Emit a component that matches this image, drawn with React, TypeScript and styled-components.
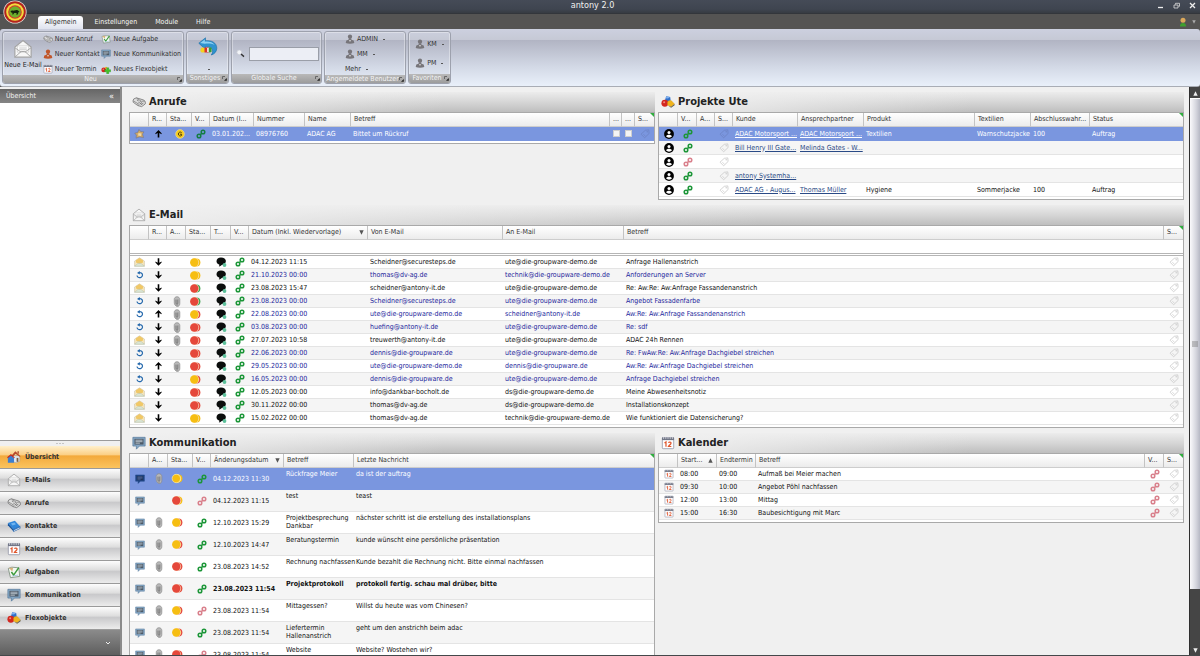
import React from "react";
import styled, { createGlobalStyle, css } from "styled-components";

const GlobalStyle = createGlobalStyle`
  * { box-sizing: border-box; }
  html, body { margin: 0; padding: 0; height: 100%; overflow: hidden; }
  body, button, input, table {
    font-family: "DejaVu Sans Condensed", "DejaVu Sans", "Noto Sans", sans-serif;
    font-size: 7px;
    line-height: 9px;
    color: #222;
  }
  button { border: 0; background: none; padding: 0; margin: 0; white-space: nowrap; cursor: pointer; }
  svg { display: block; flex: none; }
`;

/* ---------- icons ---------- */

type IconProps = { size?: number };

const Logo = () => (
  <svg width="24" height="24" viewBox="0 0 24 24">
    <circle cx="12" cy="12" r="11.6" fill="#e8e0d8" />
    <circle cx="12" cy="12" r="10.8" fill="#b3241c" />
    <circle cx="12" cy="12" r="8.8" fill="#f3dc3c" />
    <circle cx="12" cy="12" r="6.8" fill="#d8352a" />
    <circle cx="12" cy="12" r="5.8" fill="#6fae2c" />
    <path d="M7.500 11.200c1-1.200 2.400-.4 3.800-.6 1.800-.6 3.200-.8 4.400.4l.9 1-1.300.3c.2 1-.3 1.600-1 2.400h-.9l.2-1.600h-2.400l-1 1.500h-.9l.2-1.800c-1.200-.1-1.700-.7-2-1.600z" fill="#14240c" />
  </svg>
);

const OpenMail = ({ size = 14 }: IconProps) => (
  <svg width={size} height={size} viewBox="0 0 16 16">
    <path d="M1.500 6.500 8 1.200l6.500 5.300v8h-13z" fill="#f7f7f7" stroke="#a2a2a2" strokeWidth=".9" />
    <path d="M3.500 5.500h9v5h-9z" fill="#fff" stroke="#c4c4c4" strokeWidth=".5" />
    <path d="M1.500 14.500 6.500 10h3l5 4.500M1.500 7l5 3.500M14.500 7l-5 3.500" fill="none" stroke="#a8a8a8" strokeWidth=".8" />
    <path d="M5 7.200h6M5 8.600h6" stroke="#bbb" strokeWidth=".6" />
  </svg>
);

const YellowMail = () => (
  <svg width="11" height="10" viewBox="0 0 11 10">
    <path d="M.6 4 5.500.8 10.400 4v5.200H.6z" fill="#f6e6bc" stroke="#c4b89c" strokeWidth=".5" />
    <path d="M2 3.200 5.500 1l3.500 2.200v2.300L5.500 7 2 5.500z" fill="#f0c868" />
    <path d="M.6 9.200 4 6.400h3l3.400 2.800z" fill="#dbe6d4" stroke="#b4c2b4" strokeWidth=".5" />
  </svg>
);

const Phone = ({ size = 14 }: IconProps) => (
  <svg width={size} height={size} viewBox="0 0 16 16">
    <path d="M1.200 6.500 2 4.500 5 3.200l8.500 2.600 1.700 2v2.400L11 13.300 6.500 12 1.400 8.300z" fill="#dedede" stroke="#707070" strokeWidth=".9" />
    <path d="m1.500 6.700 5 3 .8 2.300M5 3.500l5.800 3.700 4-.2M6.500 9.700l3.800-2.500" fill="none" stroke="#777" strokeWidth=".8" />
    <path d="m8.500 10.500 3-2M10 11.300l3-2M7.600 6.800l-2-1.200" stroke="#555" strokeWidth=".8" />
  </svg>
);

const Bust = ({ size = 10, color = "#77757a" }: IconProps & { color?: string }) => (
  <svg width={size} height={size} viewBox="0 0 10 10">
    <path d="M2.900 2.600C2.900 1.200 3.800.4 5 .4s2.100.8 2.100 2.200S6.200 5 5 5 2.900 4 2.900 2.600z" fill={color} />
    <path d="M3.800 4.500h2.400l.3 1.300 2.200.7.600 2.500c-2.500 1-6.100 1-8.600 0l.6-2.500 2.200-.7z" fill={color} />
    <path d="m4.200 6 .8 2.200.8-2.200z" fill="#e8e8e8" />
  </svg>
);

const CalendarIcon = ({ size = 14 }: IconProps) => (
  <svg width={size} height={size} viewBox="0 0 16 16">
    <rect x="1.500" y="2" width="13" height="12.500" rx="1" fill="#fdfdff" stroke="#8f93a3" strokeWidth=".9" />
    <path d="M1.200 1.500h13.600v3.200H1.200z" fill="#6f7484" />
    <path d="M3 1v2.500M5.500 1v2.500M8 1v2.500M10.500 1v2.500M13 1v2.500" stroke="#e7e7ee" strokeWidth=".8" />
    <path d="m4 8 1.700-1.200v5.400M8.500 7.700c.7-1.300 3.200-1 2.900.6-.2 1.200-1.900 2.200-2.900 3.700h3.300" fill="none" stroke="#e0562c" strokeWidth="1.400" />
  </svg>
);

const TaskIcon = ({ size = 14 }: IconProps) => (
  <svg width={size} height={size} viewBox="0 0 16 16">
    <path d="m1.500 4 4-1.500 8 .7 1 9.800-10.500 1.500z" fill="#f4f8f2" stroke="#758877" strokeWidth=".9" />
    <path d="m2 3 5 .2-1 4.200z" fill="#d8b27a" />
    <path d="m5 8 2.600 3.500L13.500 3" fill="none" stroke="#3b9b3b" strokeWidth="1.700" />
    <path d="M5.500 12.600 13 11.500" stroke="#8fb5d8" strokeWidth=".8" />
  </svg>
);

const ChatIcon = ({ size = 14, dark = false }: IconProps & { dark?: boolean }) => (
  <svg width={size} height={size} viewBox="0 0 16 16">
    <path d="M1 1.500h14v10H8.500L5 15v-3.500H1z" fill={dark ? "#1f4684" : "#86a8c6"} stroke={dark ? "#1f4684" : "#54799a"} strokeWidth=".8" />
    <path d="M2.800 3.200h10.400v6.600H2.800z" fill={dark ? "#22355c" : "#4d5a68"} />
    <path d="M4 4.800h8M4 6.500h8M4 8.200h5" stroke={dark ? "#6f8cc4" : "#dfe8ef"} strokeWidth=".8" />
  </svg>
);

const FlexIcon = ({ size = 14, plus = false }: IconProps & { plus?: boolean }) => (
  <svg width={size} height={size} viewBox="0 0 16 16">
    {!plus && <path d="m6 1.500 4.500.8.500 4-3.500 2-3-2z" fill="#2f6fca" />}
    {!plus && <path d="m6.500 1.800 3.800.6-2.300 1.700-3-.3z" fill="#7fb1ee" />}
    <circle cx="4.400" cy="9.400" r="3.900" fill="#d3271f" />
    <circle cx="3.600" cy="8.200" r="1.200" fill="#f0877f" />
    {plus && <path d="M6 5.500c1.500-1.500 3.500-1 4 .5L8 8z" fill="#f0b41c" />}
    {plus ? (
      <path d="M9 6h3.500v3h3v3.500h-3v3H9v-3H6V9h3z" fill="#43c22b" stroke="#1f8a17" strokeWidth=".5" />
    ) : (
      <path d="M7.500 8c1.500-2.500 4.500-2 5.500-.2l2.500 2.400-4 3.300-4-2z" fill="#f0b41c" stroke="#d6960c" strokeWidth=".4" />
    )}
    {!plus && <path d="m8.500 12.300 3 1.200 4-3.200v1.400l-4 3z" fill="#5c5a50" />}
  </svg>
);

const HouseIcon = () => (
  <svg width="14" height="14" viewBox="0 0 16 16">
    <path d="M6 6.500h8.500V13l-4 1.500L6 13z" fill="#dfe6ee" stroke="#8a96a8" strokeWidth=".5" />
    <path d="m4.500 7 5-5.500L15.500 7l-1 .8-4.700-3.600L6 8.500z" fill="#b5482c" />
    <path d="M11 9h2v4.500h-2z" fill="#7b5a3c" />
    <path d="M1 8.500 4.500 6 8 9v5.500H1z" fill="#3d7fd0" />
    <path d="m.5 8.800 4-3.300L8.500 9" fill="none" stroke="#c62f22" strokeWidth="1.300" />
    <path d="M12 1.500h1.500v3L12 3.400z" fill="#a9442c" />
  </svg>
);

const BookIcon = () => (
  <svg width="14" height="14" viewBox="0 0 16 16">
    <path d="m1 4.500 8-2.500 6 6.500-7.500 3.500z" fill="#2f86da" />
    <path d="m1 4.500 6.500 7.500v2.300L1 7z" fill="#14559f" />
    <path d="m7.500 12 7.500-3.500v2.300l-7.500 3.500z" fill="#3a7cc4" stroke="#1b5ba6" strokeWidth=".6" />
    <path d="m8 12.800 6.600-3v.8L8 13.600z" fill="#e6edf4" />
    <path d="m4.500 5.200 4-1.200 1.800 2-4 1.500z" fill="#6fb4f0" />
  </svg>
);

const GlobeBack = () => (
  <svg width="20" height="20" viewBox="0 0 20 20">
    <path d="M.8 6.200 7.500.8v3c6-.8 11.300 2 11.300 7.400 0 3.300-2.400 6-5.600 6.800 2.400-2.400 2.500-8.600-5.700-8.400v2.900z" fill="#2f93cf" stroke="#1b6da6" strokeWidth=".6" />
    <path d="m2.200 6 4.600-3.500v2.200c4-.5 8 .5 9.800 3.300C13.800 6.500 10 6.300 6.800 6.800z" fill="#8fd2f2" />
    <circle cx="5" cy="13" r="2.600" fill="#f3d21e" />
    <path d="M6.500 10.500h4v5h-4z" fill="#d8322a" />
    <path d="M9.200 11h1.600v4H9.200z" fill="#fff" />
    <path d="M10.800 10.500h2.700v4.500l-2.700.5z" fill="#3a9e32" />
  </svg>
);

const SearchIcon = () => (
  <svg width="9" height="9" viewBox="0 0 9 9">
    <circle cx="3.300" cy="3.300" r="2.400" fill="#f2f4f8" stroke="#c8ccd4" strokeWidth=".7" />
    <path d="m5 5 3 2.600" stroke="#333" strokeWidth="1.400" />
  </svg>
);

const StarCube = () => (
  <svg width="11" height="10" viewBox="0 0 11 10">
    <path d="m5 .5 1.600 2 3.400.4-1.500 2.200 1 3.400-4-.6-3.400 1.200.3-3L.8 4.200l3-.9z" fill="#d2a965" stroke="#6d7390" strokeWidth=".6" />
    <path d="m4.500 4 3 .5-.5 2.500-3-.5z" fill="#f1dba6" />
  </svg>
);

const Arrow = ({ up }: { up?: boolean }) => (
  <svg width="7" height="8" viewBox="0 0 7 8">
    <path
      d={up ? "M3.500 0 6.600 3.300v1L4.300 3v4.600H2.700V3L.4 4.300v-1z" : "M3.500 7.800 6.600 4.500v-1L4.300 4.800V.2H2.700v4.600L.4 3.500v1z"}
      fill="#000"
    />
  </svg>
);

const Reload = () => (
  <svg width="8" height="8" viewBox="0 0 8 8">
    <path d="M2.600 1.800c2-.8 3.900.4 3.900 2.300S4.300 7 2.800 6.500 1 5 1.300 4.500" fill="none" stroke="#2468ac" strokeWidth="1.200" />
    <path d="M3.800 0v3.400L1 1.900z" fill="#2468ac" />
  </svg>
);

const Chain = ({ color = "#1c9638" }: { color?: string }) => (
  <svg width="10" height="10" viewBox="0 0 10 10">
    <g fill="none" stroke={color} strokeWidth="1.500">
      <circle cx="7" cy="3" r="1.800" />
      <circle cx="3" cy="7" r="1.800" />
      <path d="m4.200 5.800 1.600-1.600" />
    </g>
  </svg>
);

const Tag = ({ color = "#c9c9c9" }: { color?: string }) => (
  <svg width="10" height="10" viewBox="0 0 10 10">
    <path d="M5.300 1.300 8.800.9l.3 3.600-4.500 4.300L1 5.200z" fill="none" stroke={color} strokeWidth=".8" />
    <circle cx="7.200" cy="2.800" r=".7" fill={color} />
    <path d="m3.400 5.200 2 2" stroke={color} strokeWidth=".7" />
  </svg>
);

const Clip = () => (
  <svg width="8" height="11" viewBox="0 0 8 11">
    <path d="M1.200 3.500C1.200-.2 6.800-.2 6.800 3.500v4c0 4-4.700 4-4.700 0" fill="#b9b9b9" stroke="#8a8a8a" strokeWidth=".7" />
    <path d="M1.200 3.500v3c0 3 2 3.500 3.200 3.200V4" fill="#acacac" stroke="#929292" strokeWidth=".6" />
    <path d="M3 3.500v3.700c0 1.200 1.900 1.200 1.900 0V3.300" fill="none" stroke="#737373" strokeWidth=".7" />
  </svg>
);

const Bubble = () => (
  <svg width="11" height="10" viewBox="0 0 11 10">
    <path d="M5 .5c2.900 0 4.900 1.500 4.900 3.600S8 7.900 5.700 8c-.8.900-1.800 1.500-2.900 1.400.5-.5.7-1.200.4-1.800C1.400 6.900.5 5.600.5 4.200.5 2.100 2.300.5 5 .5z" fill="#0a0d0c" />
    <circle cx="8.500" cy="8" r="1.900" fill="#5cc09a" />
  </svg>
);

const HUES: Record<string, string> = { y: "#f6be12", r: "#e5483b", g: "#3fa552" };

const Status = ({ code, ring }: { code: string; ring?: boolean }) => (
  <svg width="13" height="11" viewBox="0 0 13 11">
    <circle cx="7.400" cy="5.500" r="4" fill={HUES[code[1]]} />
    <circle cx="5.700" cy="5.500" r="4.400" fill={ring ? "#f7e9b0" : "#fbe6c4"} />
    <circle cx="5.300" cy="5.500" r="4.200" fill={HUES[code[0]]} stroke={ring ? "#f7e9b0" : "none"} strokeWidth=".6" />
  </svg>
);

const GoldBadge = () => (
  <svg width="10" height="10" viewBox="0 0 10 10">
    <circle cx="5" cy="5" r="4.400" fill="#f5cb22" stroke="#f8e7a0" strokeWidth=".5" />
    <path d="M6.600 3.600C5.400 2.500 3.400 3.200 3.400 5s2 2.500 3.200 1.500V5.200H5" fill="none" stroke="#4c3c0a" strokeWidth="1" />
  </svg>
);

const UserCircle = () => (
  <svg width="10" height="10" viewBox="0 0 10 10">
    <circle cx="5" cy="5" r="4.900" fill="#000" />
    <circle cx="5" cy="3.500" r="1.500" fill="#fff" />
    <path d="M2 7.300c.6-2.100 5.400-2.100 6 0-1.500 1.900-4.500 1.900-6 0z" fill="#fff" />
  </svg>
);

const Launcher = () => (
  <svg width="5" height="5" viewBox="0 0 5 5">
    <path d="M.5 3V.5H3" fill="none" stroke="#555" strokeWidth=".8" />
    <path d="M4.800 2v2.800H2z" fill="#222" />
  </svg>
);

const Triangle = ({ up, color = "#555", size = 5 }: { up?: boolean; color?: string; size?: number }) => (
  <svg width={size} height={size} viewBox="0 0 5 5">
    <path d={up ? "M2.500.3 4.700 4.700H.3z" : "M.3.3h4.400L2.500 4.700z"} fill={color} />
  </svg>
);

/* ---------- window frame ---------- */

const Window = styled.div`
  display: flex;
  flex-direction: column;
  height: 100vh;
  background: #f0f0f0;
  border-bottom: 1px solid #44484a;
`;

const TopBar = styled.header`
  position: relative;
  flex: none;
`;

const TitleBar = styled.div`
  display: flex;
  align-items: center;
  height: 14px;
  padding: 0 4px 2px 28px;
  background: linear-gradient(#454b57, #3f4550 70%, #373b42);
  border-bottom: 1px solid #33363b;
`;

const Title = styled.h1`
  flex: 1;
  margin: 0;
  font-size: 9px;
  line-height: 11px;
  font-weight: 400;
  color: #f0f0f0;
  text-align: center;
`;

const WindowButtons = styled.div`
  display: flex;
  gap: 9px;
  svg { width: 7px; height: 7px; }
`;

const TabBar = styled.nav`
  display: flex;
  align-items: flex-end;
  height: 15px;
  padding: 0 4px 0 38px;
  background: #555453;
`;

const Tab = styled.button<{ $active?: boolean }>`
  height: 13px;
  padding: 0 7px;
  margin-right: 4px;
  color: #f4f4f4;
  ${(p) =>
    p.$active &&
    css`
      color: #333;
      background: linear-gradient(#fff, #dfe3ee);
      border-radius: 3px 3px 0 0;
    `}
`;

const UserMenu = styled.button`
  display: flex;
  align-items: center;
  gap: 5px;
  height: 15px;
  margin-left: auto;
`;

const Orb = styled.button`
  position: absolute;
  left: 3px;
  top: 0;
`;

/* ---------- ribbon ---------- */

const RibbonBack = styled.div`
  flex: none;
  background: #555453;
`;

const Ribbon = styled.div`
  display: flex;
  gap: 2px;
  height: 58px;
  padding: 2px;
  border-radius: 3px;
  background: linear-gradient(#ccd0df 0, #c6c9d5 11px, #b1b4c3 11px, #d3d9e6 38px, #e9f0fa);
  border-bottom: 1px solid #a9adb5;
`;

const Group = styled.section<{ $width: number }>`
  display: flex;
  flex-direction: column;
  flex: none;
  width: ${(p) => p.$width}px;
  border: 1px solid #9da1ad;
  border-radius: 3px;
  box-shadow: inset 0 0 0 1px rgba(255, 255, 255, 0.35);
  overflow: hidden;
`;

const GroupBody = styled.div<{ $center?: boolean }>`
  display: flex;
  flex: 1;
  padding: 2px 2px 1px;
  align-items: center;
  justify-content: ${(p) => (p.$center ? "center" : "space-between")};
`;

const GroupCaption = styled.div`
  display: flex;
  align-items: center;
  height: 9px;
  padding: 0 1px;
  background: linear-gradient(#b9b9b9, #9c9c9c);
  color: #f4f4f4;
  span { flex: 1; text-align: center; white-space: nowrap; }
`;

const BigButton = styled.button<{ $gap?: number }>`
  display: flex;
  flex-direction: column;
  align-items: center;
  gap: ${(p) => p.$gap ?? 2}px;
  width: 36px;
`;

const Stack = styled.div<{ $gap?: number }>`
  display: flex;
  flex-direction: column;
  align-items: flex-start;
  gap: ${(p) => p.$gap ?? 5}px;
`;

const SmallButton = styled.button`
  display: flex;
  align-items: center;
  gap: 2px;
  height: 10px;
  color: #333;
`;

const Caret = styled.i`
  width: 2px;
  height: 1px;
  margin-left: 3px;
  background: #555;
`;

const Search = styled.label`
  display: flex;
  flex: 1;
  min-width: 0;
  align-items: center;
  gap: 4px;
  padding: 0 0 0 2px;
`;

const SearchInput = styled.input`
  flex: 1;
  min-width: 0;
  height: 14px;
  border: 1px solid #9a9ea8;
  background: #eceef5;
`;

/* ---------- body ---------- */

const Body = styled.div`
  display: flex;
  flex: 1;
  min-height: 0;
`;

const Sidebar = styled.aside`
  display: flex;
  flex-direction: column;
  flex: none;
  width: 122px;
  padding-top: 2px;
  border-right: 2px solid #8b8b8b;
`;

const SideHead = styled.div`
  display: flex;
  align-items: center;
  justify-content: space-between;
  height: 14px;
  padding: 0 6px;
  background: linear-gradient(#666, #858585);
  color: #f2f2f2;
  button { color: #fff; font-size: 9px; }
`;

const SideBlank = styled.div`
  flex: 1;
  background: #fff;
  border-bottom: 1px solid #9b9b9b;
`;

const Grip = styled.div`
  height: 5px;
  padding: 0 55px;
  background: radial-gradient(circle, #999 0 1px, transparent 1px) center / 3px 5px repeat-x content-box;
`;

const SideItem = styled.button<{ $active?: boolean }>`
  display: flex;
  flex: none;
  align-items: center;
  gap: 4px;
  height: 23px;
  padding: 0 7px;
  font-weight: 700;
  color: #333;
  border-bottom: 1px solid #9a9a9a;
  background: ${(p) =>
    p.$active
      ? "linear-gradient(#fff0cc, #fbcf85 40%, #f3a93b 45%, #fbc45e)"
      : "linear-gradient(#fdfdfd, #dedede 40%, #c9c9cb 48%, #ececec)"};
`;

const SideFoot = styled.div`
  display: flex;
  align-items: center;
  justify-content: flex-end;
  height: 25px;
  padding: 0 9px;
  background: linear-gradient(#8b8b8b, #5e5e5e);
`;

const Main = styled.main`
  display: grid;
  flex: 1;
  min-width: 0;
  grid-template-columns: minmax(0, 1fr) minmax(0, 1fr);
  grid-auto-rows: max-content;
  align-items: start;
  gap: 5px 3px;
  padding: 5px 5px 0 7px;
  overflow: hidden;
`;

const Panel = styled.section<{ $wide?: boolean }>`
  ${(p) => p.$wide && "grid-column: 1 / -1;"}
`;

const PanelHead = styled.div`
  display: flex;
  align-items: center;
  gap: 3px;
  height: 20px;
  padding: 0 3px;
  background: linear-gradient(90deg, #f0f0f0 0, rgba(240, 240, 240, 0) 60%), linear-gradient(#ececec, #d6d6d6 50%, #bebebe);
  h2 {
    margin: 0;
    font: 700 11px/16px "DejaVu Sans Condensed", "DejaVu Sans", sans-serif;
    color: #222;
  }
`;

const Frame = styled.div`
  position: relative;
  padding-bottom: 2px;
  border: 1px solid #a9a9a9;
  background: #fff;
`;

const Corner = styled.i`
  position: absolute;
  top: 0;
  right: 0;
  border-top: 4px solid #2fae3e;
  border-left: 4px solid transparent;
`;

const Grid = styled.table<{ $row: number }>`
  width: 100%;
  table-layout: fixed;
  border-collapse: separate;
  border-spacing: 0;
  th {
    height: 14px;
    padding: 0 3px;
    font-weight: 400;
    text-align: left;
    white-space: nowrap;
    color: #333;
    border-right: 1px solid #c3c3c3;
    border-bottom: 1px solid #cdcdcd;
    background: linear-gradient(#fff, #ececec);
  }
  th:last-child { border-right: 0; }
  td {
    height: ${(p) => p.$row}px;
    padding: 0 2px;
    overflow: hidden;
    white-space: nowrap;
    line-height: 8px;
    border-bottom: 1px solid #e4e4e4;
  }
  td > svg { margin: 0 auto; }
`;

const Row = styled.tr<{ $selected?: boolean; $read?: boolean; $bold?: boolean; $alt?: boolean }>`
  td {
    color: ${(p) => (p.$selected ? "#fff" : p.$read ? "#241f9c" : "#111")};
    background: ${(p) => (p.$selected ? "#7a96df" : p.$alt ? "#f5f5f5" : "#fff")};
    font-weight: ${(p) => (p.$bold ? 700 : 400)};
    ${(p) => p.$selected && "border-bottom-color: #7a96df;"}
  }
  a { color: ${(p) => (p.$selected ? "#fff" : "#2a4a86")}; }
`;

const FilterRow = styled.tr`
  td { height: 16px; border-bottom: 3px double #b5b5b5; }
`;

const StatusCell = styled.td`
  && { padding-right: 8px; }
`;

const WrapCell = styled.td`
  && { vertical-align: top; padding-top: 2px; white-space: pre; overflow: visible; }
`;

const SortHead = styled.div`
  display: flex;
  align-items: center;
  justify-content: space-between;
`;

const Check = styled.input`
  display: block;
  appearance: none;
  width: 7px;
  height: 7px;
  margin: 0 auto;
  background: #f4f4f4;
  border: 1px solid #cfcfcf;
`;

const Scrollbar = styled.div`
  display: flex;
  flex-direction: column;
  flex: none;
  width: 11px;
  padding-top: 1px;
  background: #454545;
  border-left: 1px solid #2f2f2f;
`;

const ScrollButton = styled.button`
  display: flex;
  align-items: center;
  justify-content: center;
  flex: none;
  height: 10px;
`;

const Thumb = styled.div`
  display: flex;
  flex: 491 0 0;
  align-items: center;
  justify-content: center;
  border-top: 1px solid #fff;
  background: linear-gradient(90deg, #fafafc, #d5d6de 60%, #b6b8c4);
`;

const Track = styled.div`
  flex: 56 0 0;
`;

/* ---------- data ---------- */

const newActions: [React.ReactNode, string][][] = [
  [
    [<Phone size={10} />, "Neuer Anruf"],
    [<Bust color="#c0562a" />, "Neuer Kontakt"],
    [<CalendarIcon size={10} />, "Neuer Termin"],
  ],
  [
    [<TaskIcon size={10} />, "Neue Aufgabe"],
    [<ChatIcon size={10} />, "Neue Kommunikation"],
    [<FlexIcon size={10} plus />, "Neues Flexobjekt"],
  ],
];

const navItems: [React.ReactNode, string][] = [
  [<HouseIcon />, "Übersicht"],
  [<OpenMail />, "E-Mails"],
  [<Phone />, "Anrufe"],
  [<BookIcon />, "Kontakte"],
  [<CalendarIcon />, "Kalender"],
  [<TaskIcon />, "Aufgaben"],
  [<ChatIcon />, "Kommunikation"],
  [<FlexIcon />, "Flexobjekte"],
];

const projects = [
  { kunde: "ADAC Motorsport ...", partner: "ADAC Motorsport ...", produkt: "Textilien", textil: "Warnschutzjacke", wahr: "100", status: "Auftrag" },
  { kunde: "Bill Henry III Gate...", partner: "Melinda Gates - W..." },
  { broken: true },
  { kunde: "antony Systemha..." },
  { kunde: "ADAC AG - Augus...", partner: "Thomas Müller", produkt: "Hygiene", textil: "Sommerjacke", wahr: "100", status: "Auftrag" },
] as { broken?: boolean; kunde?: string; partner?: string; produkt?: string; textil?: string; wahr?: string; status?: string }[];

/* read, up, clip, status, date, from, to, subject */
const mails: [boolean, boolean, boolean, string, string, string, string, string][] = [
  [false, false, false, "yy", "04.12.2023 11:15", "Scheidner@securesteps.de", "ute@die-groupware-demo.de", "Anfrage Hallenanstrich"],
  [true, false, false, "yy", "21.10.2023 00:00", "thomas@dv-ag.de", "technik@die-groupware-demo.de", "Anforderungen an Server"],
  [false, false, false, "rg", "23.08.2023 15:47", "scheidner@antony-it.de", "ute@die-groupware-demo.de", "Re: Aw:Re: Aw:Anfrage Fassandenanstrich"],
  [true, false, true, "rg", "23.08.2023 00:00", "Scheidner@securesteps.de", "ute@die-groupware-demo.de", "Angebot Fassadenfarbe"],
  [true, true, true, "yr", "22.08.2023 00:00", "ute@die-groupware-demo.de", "scheidner@antony-it.de", "Aw:Re: Aw:Anfrage Fassandenanstrich"],
  [true, false, true, "rr", "03.08.2023 00:00", "huefing@antony-it.de", "ute@die-groupware-demo.de", "Re: sdf"],
  [false, false, true, "rr", "27.07.2023 10:58", "treuwerth@antony-it.de", "ute@die-groupware-demo.de", "ADAC 24h Rennen"],
  [true, false, false, "rr", "22.06.2023 00:00", "dennis@die-groupware.de", "ute@die-groupware-demo.de", "Re: FwAw:Re: Aw:Anfrage Dachgiebel streichen"],
  [true, true, true, "rr", "29.05.2023 00:00", "ute@die-groupware-demo.de", "dennis@die-groupware.de", "Aw:Re: Aw:Anfrage Dachgiebel streichen"],
  [true, false, false, "yr", "16.05.2023 00:00", "dennis@die-groupware.de", "ute@die-groupware-demo.de", "Anfrage Dachgiebel streichen"],
  [false, false, false, "rr", "12.05.2023 00:00", "info@dankbar-bocholt.de", "ds@die-groupware-demo.de", "Meine Abwesenheitsnotiz"],
  [false, false, false, "rr", "30.11.2022 00:00", "thomas@dv-ag.de", "ds@die-groupware-demo.de", "Installationskonzept"],
  [false, false, false, "yy", "15.02.2022 00:00", "thomas@dv-ag.de", "technik@die-groupware-demo.de", "Wie funktioniert die Datensicherung?"],
];

/* clip, status, linked, date, subject, message */
const talks: [boolean, string, boolean, string, string, string][] = [
  [true, "yy", true, "04.12.2023 11:30", "Rückfrage Meier", "da ist der auftrag"],
  [false, "ry", false, "04.12.2023 11:15", "test", "teast"],
  [true, "yr", true, "12.10.2023 15:29", "Projektbesprechung\nDankbar", "nächster schritt ist die erstellung des installationsplans"],
  [true, "yr", true, "12.10.2023 14:47", "Beratungstermin", "kunde wünscht eine persönliche präsentation"],
  [true, "rr", true, "23.08.2023 14:52", "Rechnung nachfassen", "Kunde bezahlt die Rechnung nicht. Bitte einmal nachfassen"],
  [true, "rr", true, "23.08.2023 11:54", "Projektprotokoll", "protokoll fertig. schau mal drüber, bitte"],
  [true, "yr", false, "23.08.2023 11:54", "Mittagessen?", "Willst du heute was vom Chinesen?"],
  [true, "yr", true, "23.08.2023 11:54", "Liefertermin\nHallenanstrich", "geht um den anstrichh beim adac"],
  [true, "rr", false, "23.08.2023 11:54", "Website", "Website? Wostehen wir?"],
];

const events = [
  ["08:00", "09:00", "Aufmaß bei Meier machen"],
  ["09:30", "10:00", "Angebot Pöhl nachfassen"],
  ["12:00", "13:00", "Mittag"],
  ["15:00", "16:30", "Baubesichtigung mit Marc"],
];

/* ---------- shared parts ---------- */

const Cols = ({ widths }: { widths: (number | null)[] }) => (
  <colgroup>
    {widths.map((w, i) => (
      <col key={i} width={w ?? undefined} />
    ))}
  </colgroup>
);

const Heads = ({ names }: { names: React.ReactNode[] }) => (
  <thead>
    <tr>
      {names.map((n, i) => (
        <th key={i} scope="col">{n}</th>
      ))}
    </tr>
  </thead>
);

const Sorted = ({ label, up }: { label: string; up?: boolean }) => (
  <SortHead>
    {label}
    <Triangle up={up} />
  </SortHead>
);

const RibbonGroup = ({ name, width, center, children }: { name: string; width: number; center?: boolean; children: React.ReactNode }) => (
  <Group $width={width}>
    <GroupBody $center={center}>{children}</GroupBody>
    <GroupCaption>
      <span>{name}</span>
      <Launcher />
    </GroupCaption>
  </Group>
);

const TablePanel = ({
  icon, title, wide, row, widths, heads, children,
}: {
  icon: React.ReactNode; title: string; wide?: boolean; row: number;
  widths: (number | null)[]; heads: React.ReactNode[]; children: React.ReactNode;
}) => (
  <Panel $wide={wide}>
    <PanelHead>
      {icon}
      <h2>{title}</h2>
    </PanelHead>
    <Frame>
      <Grid $row={row}>
        <Cols widths={widths} />
        <Heads names={heads} />
        <tbody>{children}</tbody>
      </Grid>
      <Corner />
    </Frame>
  </Panel>
);

const PINK = "#d9808c";

export default function App() {
  return (
    <Window>
      <GlobalStyle />
      <TopBar>
        <TitleBar>
          <Title>antony 2.0</Title>
          <WindowButtons>
            <button aria-label="Minimieren">
              <svg viewBox="0 0 7 7"><path d="M1 5.500h5" stroke="#eee" strokeWidth="1.300" /></svg>
            </button>
            <button aria-label="Wiederherstellen">
              <svg viewBox="0 0 7 7"><path d="M1 3h4v3H1zM2.500 2.500V1.300h4v3H5.500" fill="none" stroke="#ddd" strokeWidth=".8" /></svg>
            </button>
            <button aria-label="Schließen">
              <svg viewBox="0 0 7 7"><path d="m1 1 5 5M6 1 1 6" stroke="#eee" strokeWidth="1.300" /></svg>
            </button>
          </WindowButtons>
        </TitleBar>
        <TabBar>
          <Tab $active>Allgemein</Tab>
          <Tab>Einstellungen</Tab>
          <Tab>Module</Tab>
          <Tab>Hilfe</Tab>
          <UserMenu aria-label="Benutzer">
            <svg width="8" height="10" viewBox="0 0 8 10">
              <path d="M1 9.500C1 6.500 2.500 6 4 6s3 .5 3 3.500z" fill="#3fa02f" />
              <circle cx="4" cy="3.300" r="2.500" fill="#dba85a" />
            </svg>
            <Triangle color="#aaa" size={4} />
          </UserMenu>
        </TabBar>
        <Orb aria-label="Startmenü"><Logo /></Orb>
      </TopBar>

      <RibbonBack>
        <Ribbon>
          <RibbonGroup name="Neu" width={182}>
            <BigButton>
              <OpenMail size={20} />
              Neue E-Mail
            </BigButton>
            {newActions.map((col, i) => (
              <Stack key={i}>
                {col.map(([icon, label]) => (
                  <SmallButton key={label}>{icon}{label}</SmallButton>
                ))}
              </Stack>
            ))}
          </RibbonGroup>
          <RibbonGroup name="Sonstiges" width={43} center>
            <BigButton $gap={12} aria-label="Sonstiges">
              <GlobeBack />
              <Caret />
            </BigButton>
          </RibbonGroup>
          <RibbonGroup name="Globale Suche" width={91}>
            <Search>
              <SearchIcon />
              <SearchInput type="text" aria-label="Globale Suche" />
            </Search>
          </RibbonGroup>
          <RibbonGroup name="Angemeldete Benutzer" width={82} center>
            <Stack>
              <SmallButton><Bust />ADMIN <Caret /></SmallButton>
              <SmallButton><Bust />MM <Caret /></SmallButton>
              <SmallButton>Mehr <Caret /></SmallButton>
            </Stack>
          </RibbonGroup>
          <RibbonGroup name="Favoriten" width={43} center>
            <Stack $gap={9}>
              <SmallButton><Bust />KM <Caret /></SmallButton>
              <SmallButton><Bust />PM <Caret /></SmallButton>
            </Stack>
          </RibbonGroup>
        </Ribbon>
      </RibbonBack>

      <Body>
        <Sidebar>
          <SideHead>
            Übersicht
            <button aria-label="Einklappen">«</button>
          </SideHead>
          <SideBlank />
          <Grip />
          {navItems.map(([icon, label], i) => (
            <SideItem key={label} $active={i === 0}>
              {icon}
              {label}
            </SideItem>
          ))}
          <SideFoot>
            <button aria-label="Mehr">
              <svg width="6" height="6" viewBox="0 0 6 6"><path d="m1 2 2 2 2-2" fill="none" stroke="#eee" strokeWidth="1" /></svg>
            </button>
          </SideFoot>
        </Sidebar>

        <Main>
          <TablePanel
            icon={<Phone />} title="Anrufe" row={14}
            widths={[19, 18, 25, 18, 44, 51, 46, null, 12, 13, 19]}
            heads={["", "R...", "Sta...", "V...", "Datum (I...", "Nummer", "Name", "Betreff", "...", "...", "S..."]}
          >
            <Row $selected>
              <td><StarCube /></td>
              <td><Arrow up /></td>
              <td><GoldBadge /></td>
              <td><Chain color="#137d42" /></td>
              <td>03.01.202...</td>
              <td>08976760</td>
              <td>ADAC AG</td>
              <td>Bittet um Rückruf</td>
              <td><Check type="checkbox" aria-label="Erledigt" /></td>
              <td><Check type="checkbox" aria-label="Privat" /></td>
              <td><Tag color="#6c83c4" /></td>
            </Row>
          </TablePanel>

          <TablePanel
            icon={<FlexIcon />} title="Projekte Ute" row={14}
            widths={[19, 19, 18, 18, 65, 66, null, 56, 59, 93]}
            heads={["", "V...", "A...", "S...", "Kunde", "Ansprechpartner", "Produkt", "Textilien", "Abschlusswahr...", "Status"]}
          >
            {projects.map((p, i) => (
              <Row key={i} $selected={i === 0} $alt={i % 2 === 1}>
                <td><UserCircle /></td>
                <td><Chain color={p.broken ? PINK : undefined} /></td>
                <td />
                <td><Tag color={i === 0 ? "#6c83c4" : undefined} /></td>
                <td>{p.kunde && <a href="#kunde">{p.kunde}</a>}</td>
                <td>{p.partner && <a href="#partner">{p.partner}</a>}</td>
                <td>{p.produkt}</td>
                <td>{p.textil}</td>
                <td>{p.wahr}</td>
                <td>{p.status}</td>
              </Row>
            ))}
          </TablePanel>

          <TablePanel
            icon={<OpenMail />} title="E-Mail" wide row={13}
            widths={[19, 18, 19, 25, 20, 18, 119, 135, 121, null, 19]}
            heads={["", "R...", "A...", "Sta...", "T...", "V...", <Sorted label="Datum (Inkl. Wiedervorlage)" />, "Von E-Mail", "An E-Mail", "Betreff", "S..."]}
          >
            <FilterRow><td colSpan={11} /></FilterRow>
            {mails.map(([read, up, clip, status, date, from, to, subject], i) => (
              <Row key={i} $read={read} $alt={i % 2 === 1}>
                <td>{read ? <Reload /> : <YellowMail />}</td>
                <td><Arrow up={up} /></td>
                <td>{clip && <Clip />}</td>
                <StatusCell><Status code={status} /></StatusCell>
                <td><Bubble /></td>
                <td><Chain /></td>
                <td>{date}</td>
                <td>{from}</td>
                <td>{to}</td>
                <td>{subject}</td>
                <td><Tag /></td>
              </Row>
            ))}
          </TablePanel>

          <TablePanel
            icon={<ChatIcon />} title="Kommunikation" row={22}
            widths={[19, 19, 25, 18, 73, 70, null]}
            heads={["", "A...", "Sta...", "V...", <Sorted label="Änderungsdatum" />, "Betreff", "Letzte Nachricht"]}
          >
            {talks.map(([clip, status, linked, date, subject, text], i) => (
              <Row key={i} $selected={i === 0} $alt={i % 2 === 1} $bold={i === 5}>
                <td><ChatIcon size={10} dark={i === 0} /></td>
                <td>{clip && <Clip />}</td>
                <StatusCell><Status code={status} ring={i === 0} /></StatusCell>
                <td><Chain color={linked ? undefined : PINK} /></td>
                <td>{date}</td>
                <WrapCell>{subject}</WrapCell>
                <WrapCell>{text}</WrapCell>
              </Row>
            ))}
          </TablePanel>

          <TablePanel
            icon={<CalendarIcon />} title="Kalender" row={13}
            widths={[19, 39, 39, null, 19, 19]}
            heads={["", <Sorted label="Start..." up />, "Endtermin", "Betreff", "V...", "S..."]}
          >
            {events.map(([start, end, subject], i) => (
              <Row key={i} $alt={i % 2 === 1}>
                <td><CalendarIcon size={10} /></td>
                <td>{start}</td>
                <td>{end}</td>
                <td>{subject}</td>
                <td><Chain color={PINK} /></td>
                <td><Tag /></td>
              </Row>
            ))}
          </TablePanel>
        </Main>

        <Scrollbar>
          <ScrollButton aria-label="Nach oben"><Triangle up color="#eee" /></ScrollButton>
          <Thumb>
            <svg width="6" height="6" viewBox="0 0 6 6"><path d="M0 1h6M0 3h6M0 5h6" stroke="#777" strokeWidth=".8" /></svg>
          </Thumb>
          <Track />
          <ScrollButton aria-label="Nach unten"><Triangle color="#eee" /></ScrollButton>
        </Scrollbar>
      </Body>
    </Window>
  );
}
